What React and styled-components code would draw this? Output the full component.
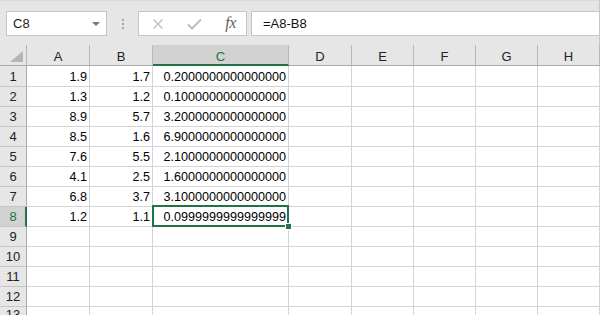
import React from "react";
import styled, { createGlobalStyle } from "styled-components";

const Global = createGlobalStyle`
  html, body { margin: 0; padding: 0; background: #ffffff; overflow: hidden; }
  body { width: 600px; height: 315px; font-family: "Liberation Sans", Arial, sans-serif; }
`;

const GREEN = "#217346";

const Page = styled.div`
  position: relative;
  width: 600px;
  height: 315px;
  overflow: hidden;
  background: #ffffff;
`;

const Toolbar = styled.div`
  box-sizing: border-box;
  height: 45px;
  background: #e6e6e6;
  border-top: 1px solid #d9d9d9;
  border-right: 1px solid #c6c6c6;
  display: flex;
  align-items: flex-start;
  padding: 10px 0 0 6px;
`;

const NameBox = styled.div`
  box-sizing: border-box;
  width: 101px;
  height: 25px;
  background: #ffffff;
  border: 1px solid #c6c6c6;
  display: flex;
  align-items: center;
  justify-content: space-between;
  padding: 0 6px 0 6px;
  font-size: 13px;
  color: #222;
`;

const Caret = styled.span`
  width: 0;
  height: 0;
  border-left: 4px solid transparent;
  border-right: 4px solid transparent;
  border-top: 4px solid #777;
`;

const Grip = styled.div`
  width: 31px;
  height: 25px;
  display: flex;
  flex-direction: column;
  align-items: center;
  justify-content: center;
  gap: 2px;
`;

const GripDot = styled.span`
  width: 2px;
  height: 2px;
  background: #a6a6a6;
`;

const FxBox = styled.div`
  box-sizing: border-box;
  width: 109px;
  height: 25px;
  background: #ffffff;
  border: 1px solid #c6c6c6;
  display: grid;
  grid-template-columns: 37px 37px 35px;
  align-items: center;
  justify-items: center;
  margin-right: 4px;
`;

const FxText = styled.span`
  font-family: "Liberation Serif", "Times New Roman", serif;
  font-style: italic;
  font-size: 16px;
  color: #5f5f5f;
  letter-spacing: -0.5px;
  margin-top: -2px;
`;

const FormulaInput = styled.div`
  box-sizing: border-box;
  flex: 1;
  height: 25px;
  background: #ffffff;
  border: 1px solid #c6c6c6;
  border-right: none;
  display: flex;
  align-items: center;
  padding-left: 11px;
  font-size: 13px;
  color: #111;
`;

const Sheet = styled.div`
  display: grid;
  grid-template-columns: 27px 63px 63px 136px 63px 62px 62px 62px 62px;
  grid-template-rows: 21px 21px repeat(11, 20px);
  background: #ffffff;
`;

const Corner = styled.div`
  box-sizing: border-box;
  background: #e6e6e6;
  border-right: 1px solid #b5b5b5;
  border-bottom: 1px solid #ababab;
  display: flex;
  align-items: flex-end;
  justify-content: flex-end;
  padding: 0 3px 3px 0;
`;

const ColHead = styled.div`
  box-sizing: border-box;
  background: ${(p) => (p.$selected ? "#d2d2d2" : "#e6e6e6")};
  border-right: 1px solid #b9b9b9;
  border-bottom: ${(p) => (p.$selected ? `2px solid ${GREEN}` : "1px solid #ababab")};
  color: ${(p) => (p.$selected ? GREEN : "#222")};
  font-size: 13px;
  display: flex;
  align-items: center;
  justify-content: center;
  padding-top: ${(p) => (p.$selected ? "3px" : "2px")};
`;

const RowHead = styled.div`
  box-sizing: border-box;
  background: ${(p) => (p.$selected ? "#d2d2d2" : "#e6e6e6")};
  border-right: ${(p) => (p.$selected ? `2px solid ${GREEN}` : "1px solid #ababab")};
  border-bottom: 1px solid #c6c6c6;
  color: ${(p) => (p.$selected ? GREEN : "#222")};
  font-size: 13px;
  display: flex;
  align-items: center;
  justify-content: center;
  padding-left: ${(p) => (p.$selected ? "1px" : "0")};
`;

const Cell = styled.div`
  box-sizing: border-box;
  border-right: 1px solid #d4d4d4;
  border-bottom: 1px solid #d4d4d4;
  font-size: 12.6px;
  color: #000;
  display: flex;
  align-items: center;
  justify-content: flex-end;
  padding: 1px 2px 0 0;
  white-space: nowrap;
  overflow: visible;
`;

const Selection = styled.div`
  position: absolute;
  box-sizing: border-box;
  left: 152px;
  top: 205px;
  width: 137px;
  height: 22px;
  border: 2px solid ${GREEN};
  pointer-events: none;
`;

const FillHandle = styled.div`
  position: absolute;
  left: 285px;
  top: 223px;
  width: 5px;
  height: 5px;
  background: ${GREEN};
  border: 1px solid #ffffff;
  pointer-events: none;
`;

const cols = ["A", "B", "C", "D", "E", "F", "G", "H"];
const data = [
  ["1.9", "1.7", "0.2000000000000000"],
  ["1.3", "1.2", "0.1000000000000000"],
  ["8.9", "5.7", "3.2000000000000000"],
  ["8.5", "1.6", "6.9000000000000000"],
  ["7.6", "5.5", "2.1000000000000000"],
  ["4.1", "2.5", "1.6000000000000000"],
  ["6.8", "3.7", "3.1000000000000000"],
  ["1.2", "1.1", "0.0999999999999999"],
];

export default function App() {
  const rows = Array.from({ length: 12 }, (_, i) => i + 1);
  return (
    <Page>
      <Global />
      <Toolbar>
        <NameBox>
          <span>C8</span>
          <Caret />
        </NameBox>
        <Grip>
          <GripDot />
          <GripDot />
          <GripDot />
        </Grip>
        <FxBox>
          <svg width="12" height="12" viewBox="0 0 12 12">
            <path d="M1.5 1.5 L10.5 10.5 M10.5 1.5 L1.5 10.5" stroke="#bdbdbd" strokeWidth="1.4" fill="none" />
          </svg>
          <svg width="15" height="12" viewBox="0 0 15 12">
            <path d="M1 6.5 L5 10.5 L14 1.5" stroke="#bdbdbd" strokeWidth="2" fill="none" />
          </svg>
          <FxText>fx</FxText>
        </FxBox>
        <FormulaInput>=A8-B8</FormulaInput>
      </Toolbar>
      <Sheet>
        <Corner>
          <svg width="13" height="11" viewBox="0 0 13 11">
            <polygon points="13,0 13,11 0,11" fill="#b4b4b4" />
          </svg>
        </Corner>
        {cols.map((c) => (
          <ColHead key={c} $selected={c === "C"}>
            {c}
          </ColHead>
        ))}
        {rows.map((r) => (
          <React.Fragment key={r}>
            <RowHead $selected={r === 8}>{r}</RowHead>
            {cols.map((c, ci) => (
              <Cell key={c}>{data[r - 1] && ci < 3 ? data[r - 1][ci] : ""}</Cell>
            ))}
          </React.Fragment>
        ))}
        <RowHead>13</RowHead>
        {cols.map((c) => (
          <Cell key={"13" + c} />
        ))}
      </Sheet>
      <Selection />
      <FillHandle />
    </Page>
  );
}
